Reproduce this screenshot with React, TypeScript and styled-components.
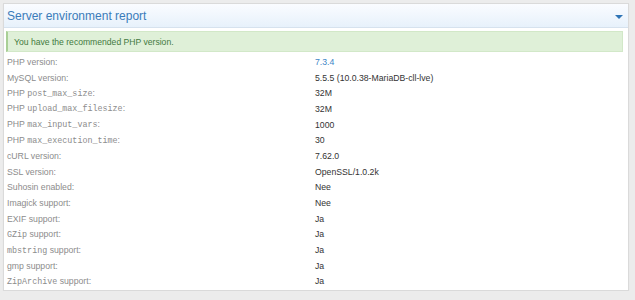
import React from "react"
import styled, { createGlobalStyle } from "styled-components"

const GlobalStyle = createGlobalStyle`
  html, body {
    margin: 0;
    padding: 0;
    background: #ececec;
    font-family: "Liberation Sans", Arial, sans-serif;
  }
`

const Page = styled.div`
  padding: 3px 6px 0 3px;
`

const Panel = styled.section`
  height: 288px;
  box-sizing: border-box;
  background: #fff;
  border: 1px solid #dadada;
  box-shadow: 0 1px 1px rgba(0, 0, 0, 0.06);
`

const Header = styled.header`
  height: 24px;
  box-sizing: border-box;
  display: flex;
  align-items: center;
  justify-content: space-between;
  padding: 0 5px 0 3px;
  background: linear-gradient(#fafcff, #e7f1fb);
  border-bottom: 1px solid #d6e2ee;
`

const Title = styled.h2`
  margin: 0;
  font-size: 12px;
  font-weight: normal;
  color: #3b7cba;
`

const Caret = styled.span`
  width: 0;
  height: 0;
  border-left: 4px solid transparent;
  border-right: 4px solid transparent;
  border-top: 4px solid #2f74b5;
  margin-top: 2px;
`

const Body = styled.div`
  padding: 3px 5px 0 2px;
`

const Alert = styled.div`
  height: 21px;
  box-sizing: border-box;
  display: flex;
  align-items: center;
  padding-left: 6px;
  background: #dff0d8;
  border: 1px solid #d2e8c8;
  border-left: 2px solid #a9cf96;
  color: #437a3f;
  font-size: 8.6px;
`

const Table = styled.div`
  margin-top: 2px;
`

const Row = styled.div`
  display: grid;
  grid-template-columns: 308px 1fr;
  height: 15.7px;
  align-items: center;
  padding-left: 1px;
  font-size: 8.7px;
`

const Label = styled.span`
  color: #8c8c8c;
`

const Code = styled.code`
  font-family: "Liberation Mono", monospace;
  font-size: 8.4px;
  color: #8c8c8c;
`

const Value = styled.span<{ $link?: boolean }>`
  color: ${(p) => (p.$link ? "#3d85c6" : "#333")};
`

type Item = { label: React.ReactNode; value: string; link?: boolean }

const items: Item[] = [
  { label: "PHP version:", value: "7.3.4", link: true },
  { label: "MySQL version:", value: "5.5.5 (10.0.38-MariaDB-cll-lve)" },
  { label: <>PHP <Code>post_max_size</Code>:</>, value: "32M" },
  { label: <>PHP <Code>upload_max_filesize</Code>:</>, value: "32M" },
  { label: <>PHP <Code>max_input_vars</Code>:</>, value: "1000" },
  { label: <>PHP <Code>max_execution_time</Code>:</>, value: "30" },
  { label: "cURL version:", value: "7.62.0" },
  { label: "SSL version:", value: "OpenSSL/1.0.2k" },
  { label: "Suhosin enabled:", value: "Nee" },
  { label: "Imagick support:", value: "Nee" },
  { label: "EXIF support:", value: "Ja" },
  { label: <><Code>GZip</Code> support:</>, value: "Ja" },
  { label: <><Code>mbstring</Code> support:</>, value: "Ja" },
  { label: "gmp support:", value: "Ja" },
  { label: <><Code>ZipArchive</Code> support:</>, value: "Ja" },
]

export default function App() {
  return (
    <Page>
      <GlobalStyle />
      <Panel>
        <Header>
          <Title>Server environment report</Title>
          <Caret />
        </Header>
        <Body>
          <Alert>You have the recommended PHP version.</Alert>
          <Table>
            {items.map((item, i) => (
              <Row key={i}>
                <Label>{item.label}</Label>
                <Value $link={item.link}>{item.value}</Value>
              </Row>
            ))}
          </Table>
        </Body>
      </Panel>
    </Page>
  )
}
